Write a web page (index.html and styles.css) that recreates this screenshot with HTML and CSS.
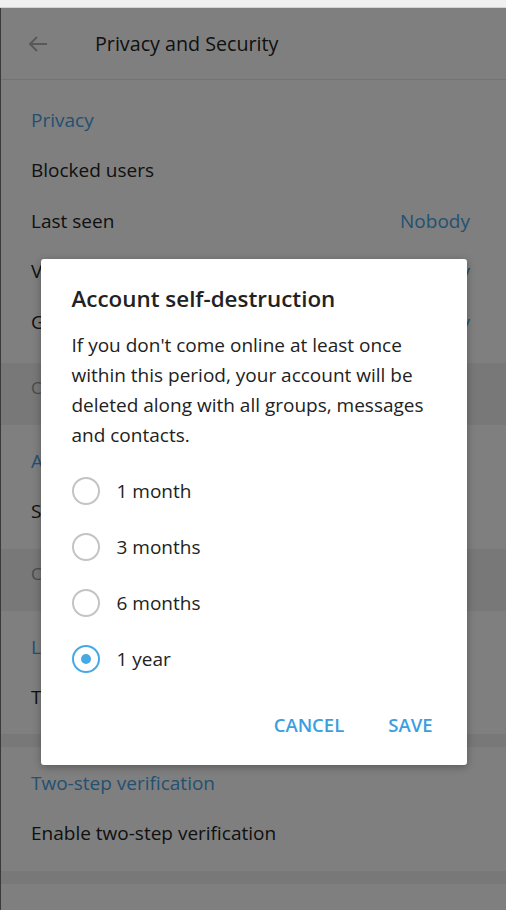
FILE: index.html
```html
<!DOCTYPE html>
<html lang="en">
<head>
  <meta charset="UTF-8" />
  <meta name="viewport" content="width=device-width, initial-scale=1.0"/>
  <title>Privacy and Security</title>
  <link rel="stylesheet" href="styles.css">
</head>
<body>

  <div class="titlebar"></div>

  <div class="app">
    <header class="topbar">
      <svg class="back" width="24" height="24" viewBox="0 0 24 24">
        <path d="M21 12H4M11 5l-7 7 7 7" fill="none" stroke="#b0b0b0" stroke-width="2"/>
      </svg>
      <h1>Privacy and Security</h1>
    </header>

    <section class="group first">
      <div class="group-title">Privacy</div>
      <div class="row">Blocked users</div>
      <div class="row">Last seen <span class="value">Nobody</span></div>
      <div class="row">Voice calls <span class="value">Nobody</span></div>
      <div class="row">Groups <span class="value">Everybody</span></div>
    </section>
    <div class="note">Change who can add you to groups.</div>

    <section class="group">
      <div class="group-title">Active sessions</div>
      <div class="row">Show all sessions</div>
    </section>
    <div class="note">Control your sessions.</div>

    <section class="group">
      <div class="group-title">Local passcode</div>
      <div class="row">Turn on local passcode</div>
    </section>
    <div class="divider"></div>

    <section class="group">
      <div class="group-title">Two-step verification</div>
      <div class="row">Enable two-step verification</div>
    </section>
    <div class="divider"></div>

    <section class="group"></section>

    <!-- dialog -->
    <div class="overlay">
      <div class="dialog">
        <h2>Account self-destruction</h2>
        <p>If you don't come online at least once within this period, your account will be deleted along with all groups, messages and contacts.</p>

        <label class="radio"><span class="circle"></span>1 month</label>
        <label class="radio"><span class="circle"></span>3 months</label>
        <label class="radio"><span class="circle"></span>6 months</label>
        <label class="radio checked"><span class="circle"></span>1 year</label>

        <div class="actions">
          <button>CANCEL</button>
          <button>SAVE</button>
        </div>
      </div>
    </div>
  </div>

</body>
</html>
```

FILE: styles.css
```css
body {
  margin: 0;
  font-family: "Open Sans", "Liberation Sans", sans-serif;
  color: #222;
  background-color: #fff;
  overflow: hidden;
}

.titlebar {
  height: 7px;
  background-color: #f0f0f0;
  border-bottom: 1px solid #d4d4d4;
}

.app {
  position: relative;
  height: 902px;
  border-left: 1px solid #3a3a3a;
  overflow: hidden;
}

.topbar {
  display: flex;
  align-items: center;
  height: 72px;
  border-bottom: 1px solid #e6e6e6;
  box-sizing: border-box;
  padding-left: 25px;
}

.topbar .back {
  margin-right: 45px;
}

.topbar h1 {
  margin: 0;
  font-size: 19.7px;
  font-weight: 400;
  color: #222;
}

.group {
  padding: 11px 36px 12px 30px;
}

.group.first {
  padding-top: 15px;
  padding-bottom: 16px;
}

.group-title {
  height: 50px;
  line-height: 50px;
  font-size: 19px;
  color: #46a2e4;
}

.row {
  display: flex;
  justify-content: space-between;
  height: 50.5px;
  line-height: 50px;
  font-size: 19px;
}

.row .value {
  color: #46a2e4;
}

.note {
  background-color: #f0f0f0;
  color: #999;
  font-size: 17px;
  line-height: 22px;
  padding: 14px 30px 26px;
}

.divider {
  height: 13px;
  background-color: #f0f0f0;
}

.overlay {
  position: absolute;
  inset: 0;
  background-color: rgba(0, 0, 0, 0.5);
  display: flex;
  justify-content: center;
  align-items: flex-start;
  padding-top: 251px;
}

.dialog {
  width: 426px;
  box-sizing: border-box;
  background-color: #fff;
  border-radius: 3px;
  box-shadow: 0 2px 8px rgba(0, 0, 0, 0.3);
  padding: 25px 34px 27px 31px;
}

.dialog h2 {
  margin: 0 0 16px;
  font-size: 22.4px;
  font-weight: 600;
  line-height: 30px;
  color: #222;
}

.dialog p {
  margin: 0 0 13px;
  font-size: 19px;
  line-height: 30px;
  color: #222;
}

.radio {
  display: flex;
  align-items: center;
  height: 56px;
  font-size: 19px;
  color: #222;
}

.radio .circle {
  width: 28px;
  height: 28px;
  box-sizing: border-box;
  border: 2px solid #c4c4c4;
  border-radius: 50%;
  margin-right: 17px;
  position: relative;
}

.radio.checked .circle {
  border-color: #46a9e6;
}

.radio.checked .circle::after {
  content: "";
  position: absolute;
  left: 7px;
  top: 7px;
  width: 10px;
  height: 10px;
  border-radius: 50%;
  background-color: #46a9e6;
}

.actions {
  display: flex;
  justify-content: flex-end;
  gap: 44px;
  margin-top: 25px;
}

.actions button {
  background: none;
  border: none;
  padding: 0;
  font-family: inherit;
  font-size: 18.5px;
  font-weight: 600;
  line-height: 26px;
  color: #3a9fe0;
  cursor: pointer;
}
```
